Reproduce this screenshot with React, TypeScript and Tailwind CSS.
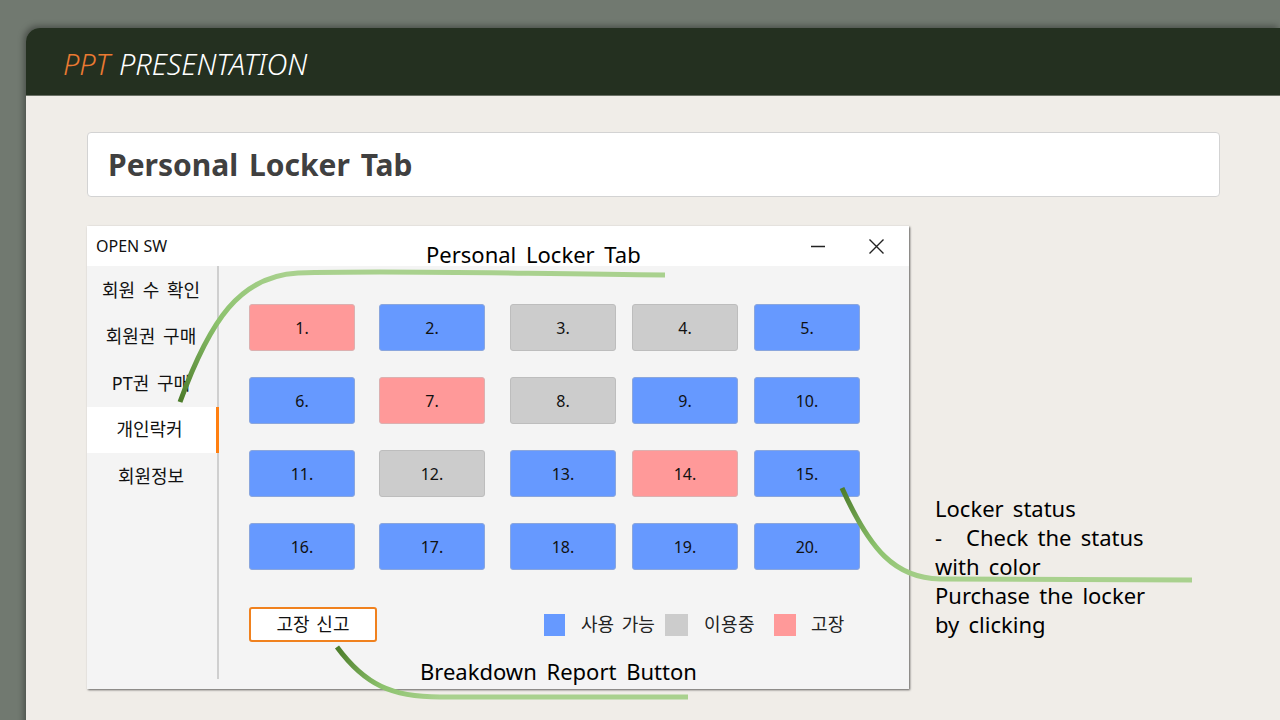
import React from "react";

const FONT = { fontFamily: '"Noto Sans", "Noto Sans CJK KR", sans-serif' };

type Status = "free" | "used" | "broken";

const lockers: Status[] = [
  "broken", "free", "used", "used", "free",
  "free", "broken", "used", "free", "free",
  "free", "used", "free", "broken", "free",
  "free", "free", "free", "free", "free",
];

const statusClass: Record<Status, string> = {
  free: "bg-[#6699ff] border-[#8aa6dd]",
  used: "bg-[#cccccc] border-[#bdbdbd]",
  broken: "bg-[#ff9999] border-[#dcb0b0]",
};

const menu = ["회원 수 확인", "회원권 구매", "PT권 구매", "개인락커", "회원정보"];

function Grad({ id, x1, y1, x2, y2 }: { id: string; x1: number; y1: number; x2: number; y2: number }) {
  return (
    <linearGradient id={id} gradientUnits="userSpaceOnUse" x1={x1} y1={y1} x2={x2} y2={y2}>
      <stop offset="0" stopColor="#4c7c2a" />
      <stop offset="0.5" stopColor="#8cc26d" />
      <stop offset="1" stopColor="#a9d18e" />
    </linearGradient>
  );
}

function Curves() {
  return (
    <svg className="absolute inset-0 pointer-events-none" width={1280} height={720}>
      <defs>
        <Grad id="g1" x1={180} y1={402} x2={290} y2={274} />
        <Grad id="g2" x1={337} y1={647} x2={440} y2={697} />
        <Grad id="g3" x1={842} y1={488} x2={935} y2={579} />
      </defs>
      <path d="M180 402 C 210 320, 240 276, 298 273 C 400 270, 520 274, 665 275" fill="none" stroke="url(#g1)" strokeWidth="5" />
      <path d="M337 647 C 365 685, 392 697, 440 697 L 688 697" fill="none" stroke="url(#g2)" strokeWidth="5" />
      <path d="M842 488 C 870 550, 895 578, 940 579 L 1192 580" fill="none" stroke="url(#g3)" strokeWidth="5" />
    </svg>
  );
}

function AppWindow() {
  return (
    <div className="w-[822px] h-[463px] bg-[#f4f4f4] flex flex-col shadow-[1px_1px_2px_rgba(0,0,0,0.6)]">
      <div className="h-[40px] bg-white flex items-center shrink-0">
        <span className="pl-[9px] text-[16px] text-[#111]">OPEN SW</span>
        <div className="ml-auto flex items-center gap-[42px] pr-[24px] text-[#222]">
          <svg width="16" height="16" viewBox="0 0 16 16">
            <path d="M1 8.5 H15" stroke="#222" strokeWidth="1.3" />
          </svg>
          <svg width="17" height="17" viewBox="0 0 17 17">
            <path d="M1.5 1.5 L15.5 15.5 M15.5 1.5 L1.5 15.5" stroke="#222" strokeWidth="1.4" />
          </svg>
        </div>
      </div>
      <div className="flex flex-1">
        <div className="w-[132px] flex flex-col pb-[10px] shrink-0">
          <div className="flex-1 flex flex-col border-r-2 border-[#cfcfcf] pt-[1px]">
            {menu.map((m, i) => (
              <div
                key={m}
                className={
                  "h-[46.5px] flex items-center justify-center text-[18px] text-[#111] [word-spacing:3px] " +
                  (i === 3 ? "bg-white -mr-[2px] border-r-[3px] border-[#ff7f10] pr-[4px]" : "pr-[2px]")
                }
              >
                {m}
              </div>
            ))}
          </div>
        </div>
        <div className="flex-1 pl-[30px] pt-[38px] flex flex-col">
          <div className="grid grid-cols-[130px_131px_122px_122px_106px] gap-y-[26px]">
            {lockers.map((s, i) => (
              <div
                key={i}
                className={"w-[106px] h-[47px] rounded-[3px] border flex items-center justify-center text-[16px] text-[#111] " + statusClass[s]}
              >
                {i + 1}.
              </div>
            ))}
          </div>
          <div className="mt-[37px] flex items-center">
            <div className="w-[128px] h-[35px] border-2 border-[#f0811e] rounded-[3px] bg-white flex items-center justify-center text-[18px] text-[#111] [word-spacing:2px]">
              고장 신고
            </div>
            <div className="ml-[167px] flex items-center text-[18px] text-[#222]">
              <div className="w-[21px] h-[22px] bg-[#6699ff]" />
              <span className="ml-[16px] [word-spacing:3px]">사용 가능</span>
              <div className="ml-[10px] w-[23px] h-[22px] bg-[#cccccc]" />
              <span className="ml-[16px] tracking-[0.5px]">이용중</span>
              <div className="ml-[19px] w-[22px] h-[22px] bg-[#ff9999]" />
              <span className="ml-[15px]">고장</span>
            </div>
          </div>
        </div>
      </div>
    </div>
  );
}

export default function App() {
  return (
    <div className="relative w-[1280px] h-[720px] overflow-hidden bg-[#717970] pt-[28px] pl-[26px]" style={FONT}>
      <div className="h-[720px] rounded-tl-[14px] overflow-hidden flex flex-col shadow-[-2px_-2px_6px_rgba(0,0,0,0.35)]">
        <div className="h-[68px] bg-[#243020] flex items-center pl-[37px] pt-[4px] shrink-0 border-b border-[#6b7166]">
          <span className="italic text-[29px] tracking-[-0.1px] font-light [word-spacing:2px]">
            <span className="text-[#ea7a32]">PPT</span>
            <span className="text-white"> PRESENTATION</span>
          </span>
        </div>
        <div className="flex-1 bg-[#f0ede8] pl-[61px] pt-[36px]">
          <div className="w-[1133px] h-[65px] bg-white border border-[#d3d3d3] rounded-[4px] flex items-center pl-[20px]">
            <h1 className="text-[30px] font-bold text-[#404040] [word-spacing:3px]">Personal Locker Tab</h1>
          </div>
          <div className="mt-[29px] flex">
            <AppWindow />
            <div className="ml-[26px] mt-[268px] text-[22px] leading-[29px] text-black [word-spacing:3.5px] whitespace-nowrap">
              <div>Locker status</div>
              <div>
                -<span className="ml-[24px]">Check the status</span>
              </div>
              <div>with color</div>
              <div>Purchase the locker</div>
              <div>by clicking</div>
            </div>
          </div>
        </div>
      </div>
      <Curves />
      <div className="absolute left-[426px] top-[240px] text-[22px] leading-[29px] text-black [word-spacing:4px]">Personal Locker Tab</div>
      <div className="absolute left-[420px] top-[657px] text-[22px] leading-[29px] text-black [word-spacing:4px]">Breakdown Report Button</div>
    </div>
  );
}
